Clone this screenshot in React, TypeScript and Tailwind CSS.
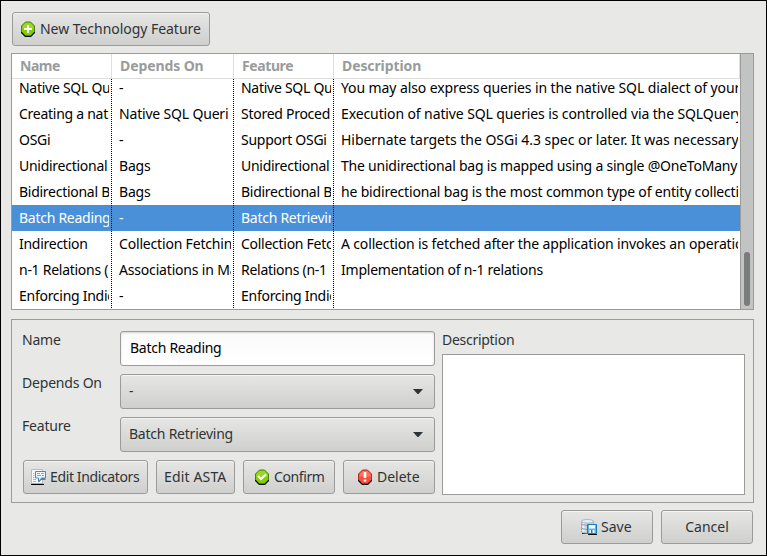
import type { ReactNode } from 'react';

type Row = { cells: [string, string, string, string]; spacing?: string; selected?: boolean };

const rows: Row[] = [
  { cells: ['Native SQL Qu', '-', 'Native SQL Qu', 'You may also express queries in the native SQL dialect of your'], spacing: 'tracking-[-0.1px]' },
  { cells: ['Creating a nativ', 'Native SQL Queri', 'Stored Proced', 'Execution of native SQL queries is controlled via the SQLQuery'], spacing: 'tracking-[-0.11px]' },
  { cells: ['OSGi', '-', 'Support OSGi', 'Hibernate targets the OSGi 4.3 spec or later. It was necessary'], spacing: 'tracking-[-0.03px]' },
  { cells: ['Unidirectional', 'Bags', 'Unidirectional', 'The unidirectional bag is mapped using a single @OneToMany'], spacing: 'tracking-[-0.22px]' },
  { cells: ['Bidirectional B', 'Bags', 'Bidirectional B', 'he bidirectional bag is the most common type of entity collectio'], spacing: 'tracking-[-0.17px]' },
  { cells: ['Batch Reading', '-', 'Batch Retrievin', ''], selected: true },
  { cells: ['Indirection', 'Collection Fetchin', 'Collection Fetc', 'A collection is fetched after the application invokes an operatio'], spacing: 'tracking-[-0.15px]' },
  { cells: ['n-1 Relations (', 'Associations in Ma', 'Relations (n-1', 'Implementation of n-1 relations'], spacing: 'tracking-[-0.23px]' },
  { cells: ['Enforcing Indic', '-', 'Enforcing Indic', ''] },
];

const dots = 'bg-[repeating-linear-gradient(to_bottom,#000_0_1px,transparent_1px_2px)]';

function Cell({ children, className = 'tracking-[-0.27px]' }: { children: string; className?: string }) {
  return <div className={`mr-[2px] overflow-hidden whitespace-nowrap pl-[7px] ${className}`}>{children}</div>;
}

function Button({ className = '', children }: { className?: string; children: ReactNode }) {
  return (
    <button
      className={`flex h-[34px] items-center whitespace-nowrap rounded-[3px] border border-[#9b9c9a] bg-linear-to-b from-[#e6e6e4] to-[#cfcfcd] shadow-[inset_0_1px_0_#f4f4f3] ${className}`}
    >
      {children}
    </button>
  );
}

function Badge({ kind }: { kind: 'add' | 'ok' | 'error' }) {
  const red = kind === 'error';
  return (
    <svg width="16" height="16" viewBox="0 0 16 16" className="shrink-0">
      <path d="M5 2h6l4 4v6l-4 4H5l-4-4V6z" fill="#111" />
      <path d="M5.500 1h5L14.500 5v5.500L10.500 14.500h-5L1.500 10.500V5z" fill={red ? '#f5503e' : '#85cc00'} stroke={red ? '#b92a20' : '#4b8106'} />
      <path d="M5.500 2h5L13.500 5v2.500h-11V5z" fill={red ? '#fa8d7b' : '#a9dd45'} opacity=".6" />
      {kind === 'add' && <path d="M8 4v8M4 8h8" stroke="#fff" strokeWidth="2" />}
      {kind === 'ok' && <path d="M4 7l3 3 5-4.500" fill="none" stroke="#fff" strokeWidth="2.300" />}
      {red && <path d="M8 3v6M8 10.500v2" stroke="#fff" strokeWidth="2.600" />}
    </svg>
  );
}

function NoteIcon() {
  return (
    <svg width="16" height="16" viewBox="0 0 16 16" className="shrink-0">
      <path d="M.5.5h11v14H.5z" fill="#f7f7f7" stroke="#bcbcbc" />
      <path d="M0 15.500h13" stroke="#000" strokeWidth="1.200" />
      <path d="M2 4.500h1.500M2 6.500h1.500M2 8.500h1.500M2 10.500h3M2 12.500h3" stroke="#b4b4b4" />
      <path d="M14.500 10h-4l-3 3" fill="none" stroke="#222" />
      <path d="M4.500 2.500h10v6.500h-4l-3 3.500V9h-3z" fill="#eaf5ff" stroke="#3d8bcb" />
      <path d="M6 4.500h3M10 4.500h3M6 6.500h4M11 6.500h2" stroke="#6caedf" />
    </svg>
  );
}

function SaveIcon() {
  return (
    <svg width="16" height="16" viewBox="0 0 16 16" className="shrink-0">
      <path d="M1 14.500h6M7 15.500h9" stroke="#111" />
      <path d="M.5 2.500v10.500c1 1.500 11 1.500 12 0V2.500z" fill="#ccd4de" stroke="#a6b0bc" />
      <path d="M2.500 4v9" stroke="#eef2f6" strokeWidth="2" />
      <path d="M.5 5.500q5.500 2 12 0M.5 9.500q5.500 2 12 0" fill="none" stroke="#929daa" />
      <ellipse cx="6.500" cy="2.300" rx="6" ry="1.800" fill="#e9eef4" stroke="#abb5c0" />
      <path d="M6.500 5.500h9v9h-9z" fill="#55b7ee" stroke="#1280bf" />
      <path d="M8 6h6v3.500H8zM8.500 11h5v3h-5z" fill="#fff" />
      <path d="M10 11h1.500v3H10z" fill="#147bb8" />
    </svg>
  );
}

function Select({ children }: { children: string }) {
  return (
    <Button className="h-[35px] w-[315px] justify-between pl-2 pr-[11px] tracking-[-0.23px]">
      <span className="pb-[2px]">{children}</span>
      <svg width="10" height="6" viewBox="0 0 10 6"><path d="M0 0h10L5.500 5h-1z" fill="#2e3436" /></svg>
    </Button>
  );
}

export default function App() {
  return (
    <main className="h-[556px] w-[767px] overflow-hidden border border-black bg-[#e8e8e6] pl-[10px] pt-[11px] font-['Noto_Sans','Open_Sans',sans-serif] text-[14px] leading-[20px] text-[#2e3436]">
      <Button className="ml-px w-[198px] gap-1 pl-[7px] tracking-[-0.04px]">
        <Badge kind="add" />
        <span>New Technology Feature</span>
      </Button>

      <section className="mt-[7px] flex h-[257px] w-[743px] border border-[#9b9c9a] bg-white text-black">
        <div className="w-[728px]">
          <div className="flex h-[25px] border-b border-[#dededc] font-bold tracking-[-0.1px] text-[#999c9b]">
            <div className="w-[100px] border-r border-[#dededc] pl-2 pt-[2px] tracking-[-0.5px]">Name</div>
            <div className="w-[122px] border-r border-[#dededc] pl-2 pt-[2px]">Depends On</div>
            <div className="w-[100px] border-r border-[#dededc] pl-2 pt-[2px] tracking-[-0.4px]">Feature</div>
            <div className="flex-1 border-r border-[#dededc] pl-2 pt-[2px]">Description</div>
          </div>
          <div className="flex h-[230px] flex-col justify-end overflow-hidden">
            {rows.map(({ cells, spacing, selected }, i) => (
              <div
                key={i}
                className={`grid h-[26px] shrink-0 grid-cols-[99px_1px_121px_1px_99px_1px_406px] leading-[26px] ${selected ? 'bg-[#4a90d9] text-white' : ''}`}
              >
                <Cell>{cells[0]}</Cell>
                <i className={dots} />
                <Cell className="tracking-[-0.18px]">{cells[1]}</Cell>
                <i className={dots} />
                <Cell>{cells[2]}</Cell>
                <i className={dots} />
                <Cell className={spacing}>{cells[3]}</Cell>
              </div>
            ))}
          </div>
        </div>
        <div className="flex w-[13px] flex-col justify-end border-l border-[#9b9c9a] bg-[#c2c4c3] pb-[3px] pl-[3px]">
          <div className="h-[54px] w-[6px] rounded-full bg-[#7a7c7b]" />
        </div>
      </section>

      <section className="mt-[9px] flex h-[184px] w-[743px] border border-[#9b9c9a] pl-[10px] pt-[11px]">
        <div className="w-[413px]">
          <div className="grid grid-cols-[98px_315px] gap-y-2 tracking-[-0.2px]">
            <label className="-mt-px">Name</label>
            <div className="flex h-[35px] items-center rounded-[3px] border border-[#9b9c9a] bg-linear-to-b from-[#fafafa] to-white pb-[2px] pl-[9px] tracking-[-0.27px] text-black shadow-[inset_0_1px_2px_#d4d4d2]">
              Batch Reading
            </div>
            <label className="-mt-px">Depends On</label>
            <Select>-</Select>
            <label className="-mt-px">Feature</label>
            <Select>Batch Retrieving</Select>
          </div>
          <div className="ml-px mt-2 flex gap-2">
            <Button className="w-[125px] gap-[3px] pl-[7px] tracking-[-0.37px]"><NoteIcon /><span>Edit Indicators</span></Button>
            <Button className="w-[79px] pl-[7px] tracking-[0.15px]">Edit ASTA</Button>
            <Button className="w-[92px] gap-1 pl-[10px] tracking-[-0.4px]"><Badge kind="ok" /><span>Confirm</span></Button>
            <Button className="w-[92px] gap-1 pl-[13px]"><Badge kind="error" /><span>Delete</span></Button>
          </div>
        </div>
        <div className="ml-[7px] w-[303px]">
          <div className="-mt-px tracking-[-0.28px]">Description</div>
          <div className="mt-1 h-[141px] border border-[#9b9c9a] bg-white" />
        </div>
      </section>

      <footer className="mt-[7px] flex w-[742px] justify-end gap-2">
        <Button className="w-[92px] gap-1 pl-[19px]"><SaveIcon /><span>Save</span></Button>
        <Button className="w-[92px] justify-center">Cancel</Button>
      </footer>
    </main>
  );
}
